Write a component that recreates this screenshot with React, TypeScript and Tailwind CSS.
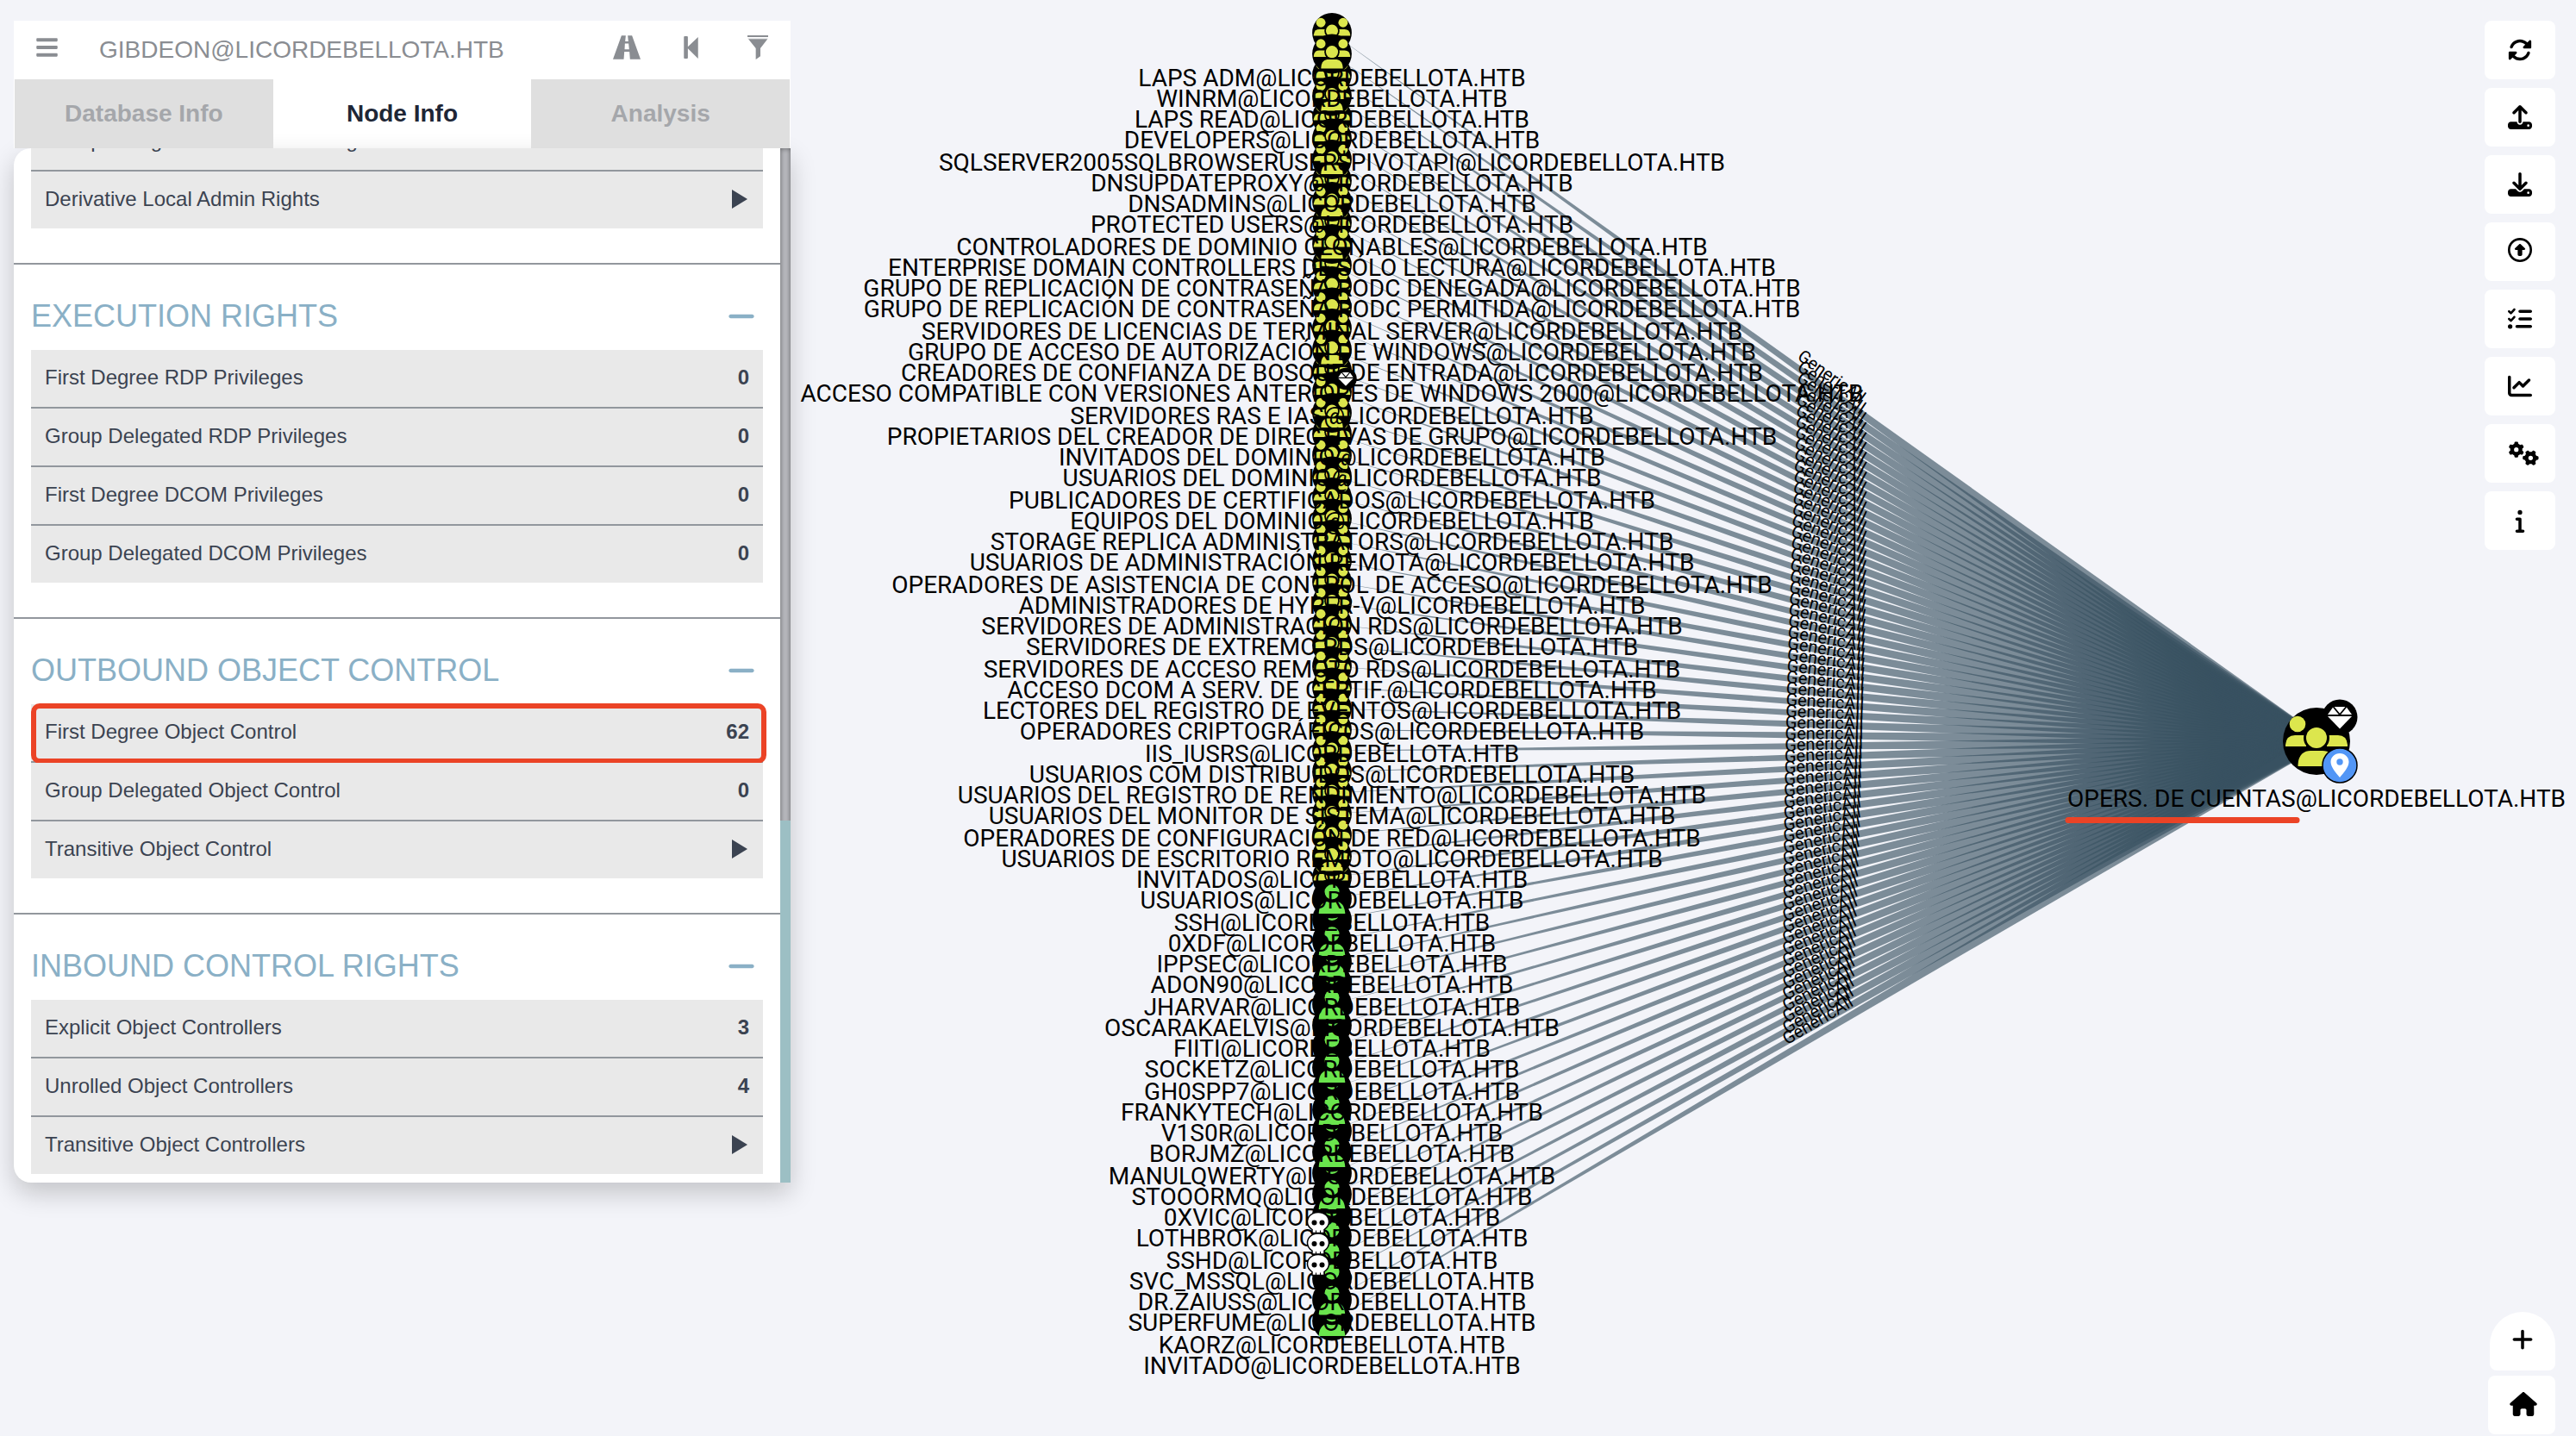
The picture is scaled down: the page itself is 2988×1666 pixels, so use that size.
import type { ReactNode } from "react";
import {
  FaChartLine,
  FaDownload,
  FaGears,
  FaHouse,
  FaInfo,
  FaListCheck,
  FaMinus,
  FaPlus,
  FaRegCircleUp,
  FaRotate,
  FaUpload,
} from "react-icons/fa6";
import { FaBars } from "react-icons/fa";

type Row = { label: string; value?: number; marked?: boolean };

const sections: { title: string; rows: Row[] }[] = [
  {
    title: "EXECUTION RIGHTS",
    rows: [
      { label: "First Degree RDP Privileges", value: 0 },
      { label: "Group Delegated RDP Privileges", value: 0 },
      { label: "First Degree DCOM Privileges", value: 0 },
      { label: "Group Delegated DCOM Privileges", value: 0 },
    ],
  },
  {
    title: "OUTBOUND OBJECT CONTROL",
    rows: [
      { label: "First Degree Object Control", value: 62, marked: true },
      { label: "Group Delegated Object Control", value: 0 },
      { label: "Transitive Object Control" },
    ],
  },
  {
    title: "INBOUND CONTROL RIGHTS",
    rows: [
      { label: "Explicit Object Controllers", value: 3 },
      { label: "Unrolled Object Controllers", value: 4 },
      { label: "Transitive Object Controllers" },
    ],
  },
];

const DOMAIN = "@LICORDEBELLOTA.HTB";

const groups = [
  "LAPS ADM",
  "WINRM",
  "LAPS READ",
  "DEVELOPERS",
  "SQLSERVER2005SQLBROWSERUSER$PIVOTAPI",
  "DNSUPDATEPROXY",
  "DNSADMINS",
  "PROTECTED USERS",
  "CONTROLADORES DE DOMINIO CLONABLES",
  "ENTERPRISE DOMAIN CONTROLLERS DE SÓLO LECTURA",
  "GRUPO DE REPLICACIÓN DE CONTRASEÑA RODC DENEGADA",
  "GRUPO DE REPLICACIÓN DE CONTRASEÑA RODC PERMITIDA",
  "SERVIDORES DE LICENCIAS DE TERMINAL SERVER",
  "GRUPO DE ACCESO DE AUTORIZACIÓN DE WINDOWS",
  "CREADORES DE CONFIANZA DE BOSQUE DE ENTRADA",
  "ACCESO COMPATIBLE CON VERSIONES ANTERIORES DE WINDOWS 2000",
  "SERVIDORES RAS E IAS",
  "PROPIETARIOS DEL CREADOR DE DIRECTIVAS DE GRUPO",
  "INVITADOS DEL DOMINIO",
  "USUARIOS DEL DOMINIO",
  "PUBLICADORES DE CERTIFICADOS",
  "EQUIPOS DEL DOMINIO",
  "STORAGE REPLICA ADMINISTRATORS",
  "USUARIOS DE ADMINISTRACIÓN REMOTA",
  "OPERADORES DE ASISTENCIA DE CONTROL DE ACCESO",
  "ADMINISTRADORES DE HYPER-V",
  "SERVIDORES DE ADMINISTRACIÓN RDS",
  "SERVIDORES DE EXTREMO RDS",
  "SERVIDORES DE ACCESO REMOTO RDS",
  "ACCESO DCOM A SERV. DE CERTIF.",
  "LECTORES DEL REGISTRO DE EVENTOS",
  "OPERADORES CRIPTOGRÁFICOS",
  "IIS_IUSRS",
  "USUARIOS COM DISTRIBUIDOS",
  "USUARIOS DEL REGISTRO DE RENDIMIENTO",
  "USUARIOS DEL MONITOR DE SISTEMA",
  "OPERADORES DE CONFIGURACIÓN DE RED",
  "USUARIOS DE ESCRITORIO REMOTO",
  "INVITADOS",
  "USUARIOS",
  "SSH",
];

const users = [
  "0XDF",
  "IPPSEC",
  "ADON90",
  "JHARVAR",
  "OSCARAKAELVIS",
  "FIITI",
  "SOCKETZ",
  "GH0SPP7",
  "FRANKYTECH",
  "V1S0R",
  "BORJMZ",
  "MANULQWERTY",
  "STOOORMQ",
  "0XVIC",
  "LOTHBROK",
  "SSHD",
  "SVC_MSSQL",
  "DR.ZAIUSS",
  "SUPERFUME",
  "KAORZ",
  "INVITADO",
];

const HIGH_VALUE = 17;
const OWNED = [57, 58, 59];

// nodes that are painted over the one below them
const raised = new Set([1, 3, 6, 8, 10, 15, 18, 39, 41, 43, 44, 46, 49, 51, 53, 55, 60]);

const COLUMN_X = 1545;
const TARGET = { x: 2687, y: 860 };

const nodes = [...groups, ...users].map((name, i) => ({
  id: i,
  name: name + DOMAIN,
  kind: i < groups.length ? "group" : "user",
  y: 38 + i * 24.5,
  labelY: 100 + Math.floor(i / 4) * 98 + (i % 4) * 24,
}));

function paintOrder() {
  const order: typeof nodes = [];
  let run: typeof nodes = [];
  for (const node of nodes) {
    run.unshift(node);
    if (!raised.has(node.id)) {
      order.push(...run);
      run = [];
    }
  }
  return [...order, ...run];
}

function GroupGlyph() {
  return (
    <g>
      <circle r="39" />
      <g fill="#dce64d">
        <circle cx="-22" cy="-20" r="9.3" />
        <circle cx="22" cy="-20" r="9.3" />
        <path d="M-36 6V4Q-35-7-25-7H-12V6Z" />
        <path d="M36 6V4Q35-7 25-7H12V6Z" />
      </g>
      <circle cy="-4" r="15" />
      <circle cy="-4" r="12" fill="#dce64d" />
      <path d="M-21.5 29V27C-21 15-14 11-7 11H7C14 11 21 15 21.5 27V29Z" fill="#dce64d" />
    </g>
  );
}

function UserGlyph() {
  return (
    <g>
      <circle r="39" />
      <g fill="#6ae54d">
        <circle cy="-13" r="14.5" />
        <path d="M-26 30V28C-25 14-18 7-10 6Q0 10 10 6C18 7 25 14 26 28V30Z" />
      </g>
    </g>
  );
}

function Diamond() {
  return (
    <g>
      <circle r="20.5" />
      <path d="M-7.5-12H7.5L14-3H-14Z" fill="#fff" />
      <path d="M-14-1H14L0 13.5Z" fill="#fff" />
      <path d="M-7.5-12L0-3L7.5-12" fill="none" stroke="#000" strokeWidth="1.8" />
    </g>
  );
}

function Skull() {
  return (
    <g>
      <path
        d="M0-12C7.5-12 12.5-7 12.5-1C12.5 3 10 6 7 8V12H-7V8C-10 6-12.5 3-12.5-1C-12.5-7-7.5-12 0-12Z"
        fill="#fff"
        stroke="#000"
        strokeWidth="1.5"
      />
      <circle cx="-4.5" r="3" />
      <circle cx="4.5" r="3" />
      <path d="M-2.5 9v3M2.5 9v3" stroke="#000" />
    </g>
  );
}

function Graph() {
  return (
    <svg
      className="absolute inset-0 h-full w-full font-[Roboto,sans-serif]"
      viewBox="0 0 2988 1666"
      preserveAspectRatio="xMidYMid slice"
      role="img"
      aria-label="GenericAll graph"
    >
      {nodes.map((node) => {
        const dx = TARGET.x - COLUMN_X;
        const dy = TARGET.y - node.y;
        const len = Math.hypot(dx, dy);
        const nx = (-dy / len) * 7.5;
        const ny = (dx / len) * 7.5;
        return (
          <polygon
            key={node.id}
            points={`${COLUMN_X},${node.y} ${TARGET.x + nx},${TARGET.y + ny} ${TARGET.x - nx},${TARGET.y - ny}`}
            fill="#385261"
            fillOpacity="0.64"
          />
        );
      })}

      {nodes.map((node) => {
        const angle = (Math.atan2(TARGET.y - node.y, TARGET.x - COLUMN_X) * 180) / Math.PI;
        return (
          <text
            key={node.id}
            transform={`translate(${(COLUMN_X + TARGET.x) / 2} ${(node.y + TARGET.y) / 2}) rotate(${angle})`}
            y="-8"
            textAnchor="middle"
            fontSize="20"
          >
            GenericAll
          </text>
        );
      })}

      {paintOrder().map((node) => (
        <g key={node.id} transform={`translate(${COLUMN_X} ${node.y}) scale(0.587)`}>
          {node.kind === "group" ? <GroupGlyph /> : <UserGlyph />}
        </g>
      ))}

      {nodes.map((node) => (
        <text key={node.id} x={COLUMN_X} y={node.labelY} textAnchor="middle" fontSize="28">
          {node.name}
        </text>
      ))}

      <g transform={`translate(${COLUMN_X + 16} ${nodes[HIGH_VALUE].y - 15}) scale(0.62)`}>
        <Diamond />
      </g>
      {OWNED.map((id) => (
        <g key={id} transform={`translate(${COLUMN_X - 16} ${nodes[id].y - 16})`}>
          <Skull />
        </g>
      ))}

      <g transform={`translate(${TARGET.x} ${TARGET.y})`}>
        <GroupGlyph />
        <g transform="translate(27 -28)">
          <Diamond />
        </g>
        <g transform="translate(27 28)">
          <circle r="20" fill="#5296f6" stroke="#000" strokeWidth="1.5" />
          <path
            d="M0-14C6-14 10.5-9.5 10.5-4C10.5 2 4 9 0 14C-4 9-10.5 2-10.5-4C-10.5-9.5-6-14 0-14Z"
            fill="#fff"
          />
          <circle cy="-4" r="3.7" fill="#5296f6" />
        </g>
        <text y="76" textAnchor="middle" fontSize="28">
          {"OPERS. DE CUENTAS" + DOMAIN}
        </text>
      </g>
      <path d="M2399 951.5H2664" stroke="#eb4326" strokeWidth="7" strokeLinecap="round" />
    </svg>
  );
}

function RoadIcon() {
  return (
    <svg className="h-7 w-8" viewBox="0 0 97 84" fill="currentColor" aria-hidden="true">
      <path d="M30 0H45L43 21H54L52 0H67L97 84H60L58 57H40L38 84H0ZM42 28L41 49H57L55 28Z" fillRule="evenodd" />
    </svg>
  );
}

function StepBackIcon() {
  return (
    <svg className="h-[26px] w-[17px]" viewBox="0 0 50 79" fill="currentColor" aria-hidden="true">
      <path d="M3 0H11Q14 0 14 3V37L50 3V79L14 43V76Q14 79 11 79H3Q0 79 0 76V3Q0 0 3 0Z" />
    </svg>
  );
}

function FilterIcon() {
  return (
    <svg className="h-7 w-6" viewBox="0 0 72 84" fill="currentColor" aria-hidden="true">
      <path d="M0 0H72V6H0ZM3 13H70L45 45V73L29 84V45Z" />
      <path d="M1 9H71V10H1Z" opacity="0.5" />
    </svg>
  );
}

function ListRow({ label, value, marked }: Row) {
  return (
    <li className="relative flex h-[68px] items-center justify-between border-b-2 border-[#92979d] bg-[#e9e9e9] px-4 pb-[2px] text-2xl text-[#3b4351] last:h-[66px] last:border-b-0">
      <span>{label}</span>
      {value === undefined ? (
        <button type="button" aria-label={`Run ${label}`} className="pr-[2px]">
          <svg className="h-[22px] w-[18px]" viewBox="0 0 18 22" fill="currentColor" aria-hidden="true">
            <path d="M0 0L18 11L0 22Z" />
          </svg>
        </button>
      ) : (
        <strong className="font-bold">{value}</strong>
      )}
      {marked && (
        <span className="absolute -top-px -right-[4px] -bottom-[3px] left-0 rounded-[10px] border-6 border-[#eb4326]" />
      )}
    </li>
  );
}

function Section({ title, rows }: { title: string; rows: Row[] }) {
  return (
    <section className="mt-10 border-t-2 border-[#92979d]">
      <div className="flex h-[99px] items-center justify-between pt-5 pr-[29px] pl-5 text-[#8ab0c6]">
        <h2 className="text-4xl">{title}</h2>
        <button type="button" aria-label={`Collapse ${title}`}>
          <FaMinus className="h-9 w-8" />
        </button>
      </div>
      <ul className="mx-5">
        {rows.map((row) => (
          <ListRow key={row.label} {...row} />
        ))}
      </ul>
    </section>
  );
}

function Sidebar() {
  return (
    <aside className="relative mt-6 ml-4 w-[901px] shrink-0 self-start">
      <header className="flex h-[68px] items-center bg-white px-[26px] text-[#8a8d92]">
        <button type="button" aria-label="Menu" className="pb-[6px]">
          <FaBars className="h-7 w-[25px]" />
        </button>
        <input
          aria-label="Search for a node"
          defaultValue={"GIBDEON" + DOMAIN}
          className="ml-12 min-w-0 flex-1 bg-transparent text-[28px] outline-none"
        />
        <div className="flex items-center gap-[50px] pb-[6px]">
          <button type="button" aria-label="Pathfinding">
            <RoadIcon />
          </button>
          <button type="button" aria-label="Back" className="w-6">
            <StepBackIcon />
          </button>
          <button type="button" aria-label="Filter">
            <FilterIcon />
          </button>
        </div>
      </header>

      <div className="bg-white px-px">
        <div role="tablist" className="grid h-20 grid-cols-3 text-[28px] font-bold">
          <button type="button" role="tab" aria-selected="false" className="bg-[#dfdfdf] text-[#a5a7ab]">
            Database Info
          </button>
          <button type="button" role="tab" aria-selected="true" className="text-[#1e2636]">
            Node Info
          </button>
          <button type="button" role="tab" aria-selected="false" className="bg-[#dfdfdf] text-[#a5a7ab]">
            Analysis
          </button>
        </div>
      </div>

      <div className="flex overflow-hidden rounded-l-[20px] bg-white shadow-[0_12px_30px_rgba(0,0,0,0.2)]">
        <div className="min-w-0 flex-1 pb-[10px]">
          <ul className="mx-5 -mt-[41px]">
            <ListRow label="Group Delegated Local Admin Rights" value={0} />
            <ListRow label="Derivative Local Admin Rights" />
          </ul>
          {sections.map((section) => (
            <Section key={section.title} {...section} />
          ))}
        </div>
        <div className="flex w-3 flex-col justify-end bg-[#babbc0] shadow-[inset_0_0_6px_rgba(0,0,0,0.5)]">
          <div className="h-[35%] bg-[#9cbfc4]" />
        </div>
      </div>
    </aside>
  );
}

function ToolButton({ label, children }: { label: string; children: ReactNode }) {
  return (
    <button
      type="button"
      aria-label={label}
      className="flex h-[68px] w-[82px] items-center justify-center rounded-lg bg-white"
    >
      {children}
    </button>
  );
}

function Toolbar() {
  return (
    <div className="relative flex flex-col items-end justify-between pt-6 pr-6 pb-[2px] text-black">
      <div className="flex flex-col gap-[10px]">
        <ToolButton label="Refresh">
          <FaRotate className="size-7" />
        </ToolButton>
        <ToolButton label="Export Graph">
          <FaUpload className="size-7" />
        </ToolButton>
        <ToolButton label="Import Graph">
          <FaDownload className="size-7" />
        </ToolButton>
        <ToolButton label="Upload Data">
          <FaRegCircleUp className="mb-1 size-7" />
        </ToolButton>
        <ToolButton label="View Upload Status">
          <FaListCheck className="size-7" />
        </ToolButton>
        <ToolButton label="Change Layout">
          <FaChartLine className="size-7" />
        </ToolButton>
        <ToolButton label="Settings">
          <FaGears className="ml-2 h-7 w-[35px]" />
        </ToolButton>
        <ToolButton label="About">
          <FaInfo className="size-7" />
        </ToolButton>
      </div>
      <div className="flex flex-col items-end gap-[6px]">
        <button
          type="button"
          aria-label="Zoom in"
          className="flex h-[68px] w-[76px] items-center justify-center rounded-t-[38px] rounded-b-lg bg-white pb-1"
        >
          <FaPlus className="size-7" />
        </button>
        <button
          type="button"
          aria-label="Reset zoom"
          className="flex h-[68px] w-[78px] items-center justify-center rounded-lg bg-white pb-[2px] pl-1"
        >
          <FaHouse className="h-7 w-8" />
        </button>
      </div>
    </div>
  );
}

export default function App() {
  return (
    <main className="relative flex h-screen justify-between overflow-hidden bg-[#f3f4f9] font-['Liberation_Sans',Arial,sans-serif]">
      <Graph />
      <Sidebar />
      <Toolbar />
    </main>
  );
}
